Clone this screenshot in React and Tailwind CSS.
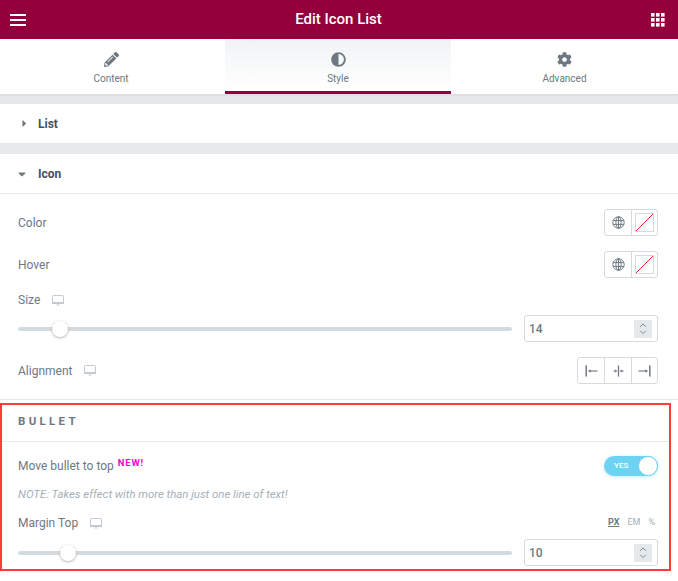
import React from "react";
import { FaPencilAlt, FaAdjust, FaCog, FaCaretRight, FaCaretDown } from "react-icons/fa";
import { ChevronUp, ChevronDown } from "lucide-react";

const Desktop = () => (
  <svg width="12" height="11" viewBox="0 0 12 11" className="text-[#c2cbd2]" fill="none">
    <rect x="0.5" y="0.5" width="11" height="7.5" rx="0.8" fill="#fff" stroke="currentColor" />
    <rect x="0" y="7" width="12" height="2" fill="currentColor" />
    <rect x="4.5" y="9.5" width="3" height="1" fill="currentColor" />
  </svg>
);

const GlobeIcon = () => (
  <svg width="13" height="13" viewBox="0 0 13 13" fill="none" stroke="#6d7882" strokeWidth="1">
    <circle cx="6.5" cy="6.5" r="5.7" />
    <ellipse cx="6.5" cy="6.5" rx="2.6" ry="5.7" />
    <line x1="6.5" y1="0.8" x2="6.5" y2="12.2" />
    <line x1="1.2" y1="4.6" x2="11.8" y2="4.6" />
    <line x1="1.2" y1="8.4" x2="11.8" y2="8.4" />
  </svg>
);

const Slider = ({ pos, value }) => (
  <div className="flex items-center h-[27px]">
    <div className="relative w-[494px] h-[4px] rounded-full bg-[#d5dadf]">
      <div
        className="absolute top-[-6px] w-[16px] h-[16px] rounded-full bg-white shadow-[0_1px_3px_rgba(0,0,0,0.3)]"
        style={{ left: pos }}
      />
    </div>
    <div className="ml-[12px] w-[134px] h-[27px] border border-[#d5dadf] rounded-[3px] flex items-center justify-between pl-[4px] pr-[5px] text-[12px] font-medium text-[#6d7882]">
      <span>{value}</span>
      <div className="w-[18px] h-[18px] bg-[#e6e9ec] flex flex-col items-center justify-center text-[#6d7882]">
        <ChevronUp size={12} strokeWidth={2} className="-mb-[3px]" />
        <ChevronDown size={12} strokeWidth={2} />
      </div>
    </div>
  </div>
);

const ColorControl = () => (
  <div className="flex w-[54px] h-[27px] border border-[#d5dadf] rounded-[3px]">
    <div className="w-[27px] flex items-center justify-center border-r border-[#d5dadf]">
      <GlobeIcon />
    </div>
    <div className="flex-1 flex items-center justify-center">
      <svg width="19" height="19" viewBox="0 0 19 19">
        <rect x="0.5" y="0.5" width="18" height="18" fill="#fff" stroke="#d5dadf" />
        <line x1="1" y1="18" x2="18" y2="1" stroke="#ff2a2a" strokeWidth="1" />
      </svg>
    </div>
  </div>
);

const AlignIcon = ({ kind }) => (
  <svg width="13" height="12" viewBox="0 0 14 12" fill="#6d7882">
    {kind === "left" && (
      <>
        <rect x="0.5" y="0" width="1.6" height="12" />
        <rect x="4" y="5.4" width="9.5" height="1.2" />
        <path d="M3.5 6 L6 4 V8 Z" />
      </>
    )}
    {kind === "center" && (
      <>
        <rect x="6.3" y="0" width="1.4" height="12" />
        <rect x="1.5" y="5.4" width="2.5" height="1.2" />
        <rect x="10" y="5.4" width="2.5" height="1.2" />
        <path d="M5.5 6 L3.5 4 V8 Z" />
        <path d="M8.5 6 L10.5 4 V8 Z" />
      </>
    )}
    {kind === "right" && (
      <>
        <rect x="11.9" y="0" width="1.6" height="12" />
        <rect x="0.5" y="5.4" width="9.5" height="1.2" />
        <path d="M10.5 6 L8 4 V8 Z" />
      </>
    )}
  </svg>
);

const Tab = ({ icon, label, active, className }) => (
  <div
    className={
      "h-[55px] flex flex-col items-center pt-[12px] " +
      className +
      " " +
      (active ? "bg-gradient-to-b from-[#f1f3f5] to-white border-b-[3px] border-[#93003c]" : "bg-white")
    }
  >
    <div className="h-[16px] flex items-center text-[#6d7882] text-[15px]">{icon}</div>
    <div className="mt-[5px] text-[10px] leading-[14px] text-[#6d7882]">{label}</div>
  </div>
);

const GridIcon = () => (
  <svg width="14" height="14" viewBox="0 0 14 14" fill="#fff">
    {[0, 5, 10].map((y) =>
      [0, 5, 10].map((x) => <rect key={x + "-" + y} x={x} y={y} width="3.6" height="3.6" />)
    )}
  </svg>
);

export default function App() {
  return (
    <div className="w-[678px] h-[581px] bg-white overflow-hidden font-['Roboto',sans-serif]">
      <header className="h-[39px] bg-[#93003c] flex items-center justify-between pl-[10px] pr-[13px] text-white">
        <div className="w-[16px] flex flex-col gap-[3px]">
          <div className="h-[2px] bg-white" />
          <div className="h-[2px] bg-white" />
          <div className="h-[2px] bg-white" />
        </div>
        <div className="text-[15px] font-medium">Edit Icon List</div>
        <GridIcon />
      </header>

      <nav className="flex">
        <Tab className="w-[225px] pr-[3px]" icon={<FaPencilAlt />} label="Content" />
        <Tab className="w-[226px]" icon={<FaAdjust />} label="Style" active />
        <Tab className="w-[227px]" icon={<FaCog />} label="Advanced" />
      </nav>

      <div className="h-[10px] bg-[#e6e9ec] shadow-[inset_0_3px_3px_-2px_rgba(0,0,0,0.08)]" />

      <div className="h-[39px] flex items-center text-[12px] font-bold text-[#495157]">
        <span className="w-[38px] flex justify-center pl-[10px] text-[11px] text-[#6d7882]"><FaCaretRight /></span>
        <span>List</span>
      </div>

      <div className="h-[11px] bg-[#e6e9ec]" />

      <div className="h-[40px] flex items-center border-b border-[#e6e9ec] text-[12px] font-bold text-[#495157]">
        <span className="w-[38px] flex justify-center pl-[6px] text-[12px] text-[#6d7882]"><FaCaretDown /></span>
        <span>Icon</span>
      </div>

      <section className="h-[206px] px-[18px] pt-[15px] border-b border-[#e6e9ec] text-[12px] text-[#6d7882]">
        <div className="h-[27px] flex items-center justify-between pr-[2px]">
          <span>Color</span>
          <ColorControl />
        </div>
        <div className="mt-[15px] h-[27px] flex items-center justify-between pr-[2px]">
          <span>Hover</span>
          <ColorControl />
        </div>
        <div className="mt-[15px] h-[14px] flex items-center gap-[12px]">
          <span>Size</span>
          <Desktop />
        </div>
        <div className="mt-[8px]">
          <Slider pos={34} value="14" />
        </div>
        <div className="mt-[15px] h-[27px] flex items-center justify-between">
          <div className="flex items-center gap-[12px]">
            <span>Alignment</span>
            <Desktop />
          </div>
          <div className="flex w-[81px] h-[27px] border border-[#d5dadf] rounded-[3px] mr-[2px]">
            <div className="w-[27px] flex items-center justify-center border-r border-[#d5dadf]"><AlignIcon kind="left" /></div>
            <div className="w-[27px] flex items-center justify-center border-r border-[#d5dadf]"><AlignIcon kind="center" /></div>
            <div className="flex-1 flex items-center justify-center"><AlignIcon kind="right" /></div>
          </div>
        </div>
      </section>

      <section className="mt-[3px] w-[671px] h-[168px] border-2 border-[#ff3b3b] text-[12px] text-[#6d7882]">
        <div className="h-[37px] border-b border-[#e6e9ec] flex items-center pl-[16px] pb-[2px] text-[11.5px] font-bold tracking-[3.3px] text-[#6d7882]">
          BULLET
        </div>
        <div className="pl-[16px]">
          <div className="mt-[14px] w-[640px] h-[20px] flex items-center justify-between">
            <div className="flex items-start">
              <span>Move bullet to top</span>
              <span className="ml-[4px] text-[9.5px] leading-[12px] font-bold tracking-[0.8px] text-[#ff00c8]">NEW!</span>
            </div>
            <div className="relative w-[54px] h-[20px] rounded-full bg-[#6ed2f2] shadow-[0_1px_4px_rgba(110,210,242,0.4)]">
              <span className="absolute left-[10px] top-[4px] text-[8px] leading-[12px] font-medium text-white">YES</span>
              <div className="absolute right-0 top-0 w-[20px] h-[20px] rounded-full bg-white border border-[#6ed2f2]" />
            </div>
          </div>
          <div className="mt-[11px] h-[16px] flex items-center text-[11.4px] italic text-[#a4afb7]">
            NOTE: Takes effect with more than just one line of text!
          </div>
          <div className="mt-[13px] w-[640px] h-[14px] flex items-center justify-between">
            <div className="flex items-center gap-[12px]">
              <span>Margin Top</span>
              <Desktop />
            </div>
            <div className="flex items-center gap-[8px] pr-[3px] text-[9px] text-[#a4afb7]">
              <span className="font-bold text-[#6d7882] underline">PX</span>
              <span>EM</span>
              <span>%</span>
            </div>
          </div>
          <div className="mt-[9px]">
            <Slider pos={42} value="10" />
          </div>
        </div>
      </section>
    </div>
  );
}
